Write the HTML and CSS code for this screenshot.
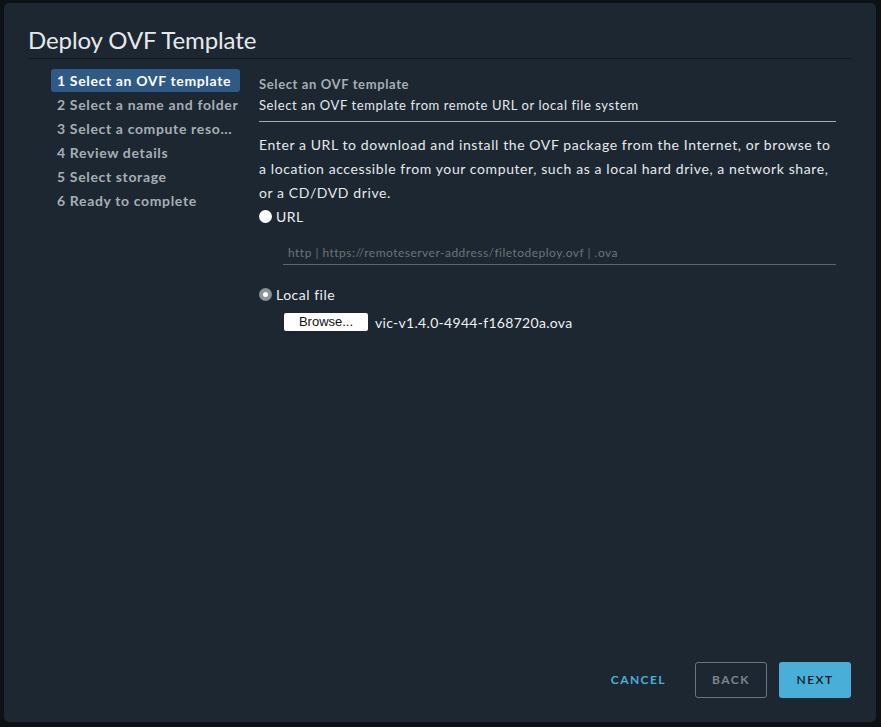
FILE: index.html
```html
<!DOCTYPE html>
<html>
<head>
<meta charset="utf-8">
<link rel="stylesheet" href="styles.css">
</head>
<body>
<div class="modal">
  <div class="header"><h1 class="title">Deploy OVF Template</h1></div>
  <div class="body">
    <nav class="steps">
      <div class="step active">1 Select an OVF template</div>
      <div class="step">2 Select a name and folder</div>
      <div class="step">3 Select a compute reso...</div>
      <div class="step">4 Review details</div>
      <div class="step">5 Select storage</div>
      <div class="step">6 Ready to complete</div>
    </nav>
    <main class="content">
      <div class="page-head">
        <div class="page-title">Select an OVF template</div>
        <div class="page-sub">Select an OVF template from remote URL or local file system</div>
      </div>
      <p class="desc">Enter a URL to download and install the OVF package from the Internet, or browse to a location accessible from your computer, such as a local hard drive, a network share, or a CD/DVD drive.</p>
      <div class="radio-row"><span class="radio on"></span><span class="label">URL</span></div>
      <div class="url-input">http | https://remoteserver-address/filetodeploy.ovf | .ova</div>
      <div class="radio-row local"><span class="radio dis"></span><span class="label">Local file</span></div>
      <div class="file-row"><span class="browse">Browse...</span><span class="fname">vic-v1.4.0-4944-f168720a.ova</span></div>
    </main>
  </div>
  <div class="footer">
    <span class="btn flat">CANCEL</span>
    <span class="btn outline">BACK</span>
    <span class="btn primary">NEXT</span>
  </div>
</div>
</body>
</html>
```
FILE: styles.css
```css
html, body { margin: 0; padding: 0; }
body {
  background: #0c1115;
  font-family: Lato, "Open Sans", sans-serif;
  width: 881px;
  height: 727px;
  overflow: hidden;
}
.modal {
  box-sizing: border-box;
  margin: 3px 5px 0 4px;
  width: 872px;
  height: 719px;
  background: #1c2731;
  border-radius: 5px;
  display: flex;
  flex-direction: column;
  padding: 0 25px 24px 24px;
}
.header {
  border-bottom: 1px solid #0f181e;
}
.title {
  margin: 0;
  padding-top: 22px;
  font-size: 24px;
  font-weight: 400;
  line-height: 30px;
  color: #e6e9ec;
  padding-left: 0;
  padding-bottom: 3px;
  letter-spacing: -0.1px;
}
.body {
  flex: 1;
  display: flex;
  gap: 19px;
  padding-top: 10px;
  padding-left: 23px;
}
.steps {
  width: 189px;
  flex: none;
}
.step {
  height: 24px;
  line-height: 23px;
  padding-left: 6px;
  font-size: 14px;
  font-weight: 700;
  letter-spacing: 0.65px;
  color: #a7afb5;
  white-space: nowrap;
  border-radius: 3px;
}
.step.active {
  background: #2e5a85;
  color: #ffffff;
  height: 23px;
  margin-bottom: 1px;
}
.content {
  flex: 1;
  padding-top: 5px;
  padding-right: 15px;
}
.page-head {
  border-bottom: 1px solid #a3abb1;
  padding-bottom: 5px;
}
.page-title {
  font-size: 13px;
  font-weight: 700;
  letter-spacing: 0.62px;
  color: #a7afb5;
  line-height: 20px;
}
.page-sub {
  font-size: 13px;
  letter-spacing: 0.58px;
  color: #e6e9ec;
  line-height: 22px;
}
.desc {
  margin: 11px 0 0 0;
  font-size: 14px;
  line-height: 24px;
  letter-spacing: 0.6px;
  color: #e6e9ec;
}
.radio-row {
  display: flex;
  align-items: center;
  gap: 4px;
  height: 22px;
}
.radio {
  width: 13px;
  height: 13px;
  border-radius: 50%;
  box-sizing: border-box;
  flex: none;
}
.radio.on { background: #ffffff; }
.radio.dis {
  background: #8b9298;
  position: relative;
}
.radio.dis::after {
  content: "";
  position: absolute;
  left: 4px; top: 4px;
  width: 5px; height: 5px;
  border-radius: 50%;
  background: #ffffff;
}
.label {
  font-size: 14px;
  letter-spacing: 0.5px;
  color: #eef0f2;
}
.url-input {
  margin: 14px 0 0 24px;
  height: 23px;
  line-height: 23px;
  border-bottom: 1px solid #5d666d;
  font-size: 12px;
  letter-spacing: 0.48px;
  color: #69747b;
  padding-left: 5px;
}
.radio-row.local { margin-top: 18px; }
.file-row {
  display: flex;
  align-items: center;
  gap: 7px;
  margin: 6px 0 0 25px;
  height: 22px;
}
.browse {
  background: #ffffff;
  color: #111;
  font-size: 13px;
  width: 84px;
  height: 18px;
  line-height: 18px;
  text-align: center;
  border-radius: 2px;
  font-family: "Liberation Sans", sans-serif;
}
.fname {
  font-size: 14px;
  letter-spacing: 0.3px;
  color: #eef0f2;
}
.footer {
  display: flex;
  justify-content: flex-end;
  align-items: center;
  gap: 12px;
}
.btn {
  box-sizing: border-box;
  height: 36px;
  line-height: 34px;
  font-size: 12px;
  font-weight: 700;
  letter-spacing: 0.12em;
  text-align: center;
  border-radius: 3px;
  border: 1px solid transparent;
}
.btn.flat { color: #49afd9; padding: 0 14px; margin-right: 2px; }
.btn.outline { width: 72px; border-color: #6c767d; color: #7b858c; }
.btn.primary { width: 72px; background: #49afd9; color: #0f1a20; font-weight: 600; }
```
